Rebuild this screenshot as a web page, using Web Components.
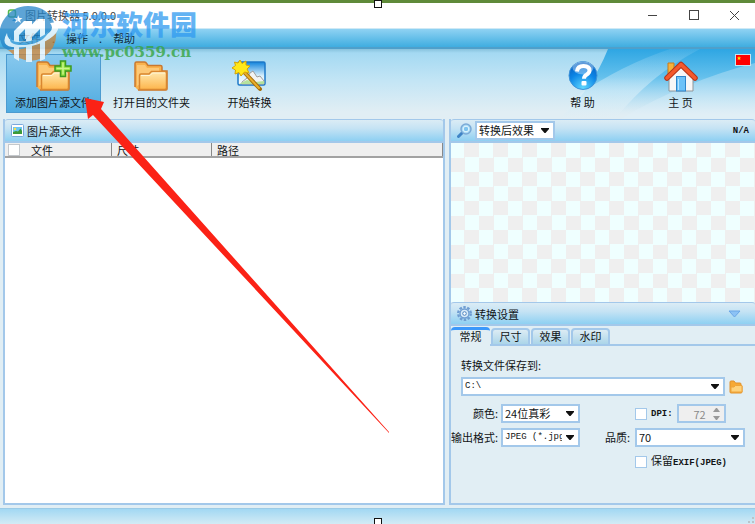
<!DOCTYPE html>
<html lang="zh-CN">
<head>
<meta charset="utf-8">
<meta name="viewport" content="width=device-width, initial-scale=1">
<title>图片转换器</title>
<style>
  body {
    margin: 0;
    background: #5f8a3a;
    font-family: "Noto Sans CJK SC", "Noto Sans", sans-serif;
    font-size: 11px;
    line-height: 16px;
    color: #111416;
    --edge: #a3c8ea;
    --face: #e1eef4;
    --mono: "Liberation Mono", "Noto Sans CJK SC", monospace;
  }
</style>
</head>
<body>
<app-window></app-window>

<script>
const ARROW = `url("data:image/svg+xml,%3Csvg xmlns='http://www.w3.org/2000/svg' width='8' height='5'%3E%3Cpath d='M0 0h8v1L4.500 5h-1L0 1z' fill='%23111'/%3E%3C/svg%3E")`;
const SPIN = `url("data:image/svg+xml,%3Csvg xmlns='http://www.w3.org/2000/svg' width='7' height='12'%3E%3Cpath d='M0 4l3-4h1l3 4zM0 8l3 4h1l3-4z' fill='%23999'/%3E%3C/svg%3E")`;

const FOLDER = `
  <defs>
    <linearGradient id="f" x2="0" y2="1"><stop stop-color="#ffeab0"/><stop offset="1" stop-color="#fdb54c"/></linearGradient>
  </defs>
  <path d="M1 27V3.500Q1 2 2.500 2h8Q12 2 13 4l1 1.500h12.500Q28 5.500 28 7v4h5V29q0 1-1 1H4" fill="#f9b24d" stroke="#c9782f" stroke-width="1.500"/>
  <path d="M3 26V5h8l2 3h12v4" fill="#fdc977"/>
  <path d="M5.500 29.500V15.500q0-1.500 1.500-1.500h8l2.500-2.500H31q1.500 0 1.500 1.500v15q0 1.500-1.500 1.500z" fill="url(#f)" stroke="#d98730" stroke-width="1.500"/>
  <path d="M7 15.500h9l2.500-2.500H31" fill="none" stroke="#fff6d8"/>`;

const ICONS = {
  add: `<svg width="36" height="32" viewBox="0 0 36 32">${FOLDER}
    <path d="M24.500 1h5v5h5.500v5h-5.500v5.500h-5V11H19V6h5.500z" fill="#8ede3c" stroke="#3d9a22" stroke-width="1.500"/>
    <path d="M27 2.500v12M20.500 8.500h13" stroke="#c9f58c" stroke-width="1.500"/></svg>`,
  open: `<svg width="36" height="32" viewBox="0 0 36 32">${FOLDER}</svg>`,
  convert: `<svg width="36" height="32" viewBox="0 0 36 32">
    <defs><linearGradient id="s" x2="0" y2="1"><stop stop-color="#1184dd"/><stop offset=".6" stop-color="#d9f0fc"/><stop offset="1" stop-color="#fff"/></linearGradient></defs>
    <rect x="6" y="2" width="27" height="23" rx="1.500" fill="url(#s)" stroke="#1c78c8" stroke-width="1.500"/>
    <path d="M10 22l5-4 3-5 3-2 4 6 3-1 4 5v3H10z" fill="#f2f3f3" stroke="#9d9d9d"/>
    <path d="M7 24l8-4 8 2 9-1v3z" fill="#b5e29c"/>
    <path d="M12 12l16 17" stroke="#a66d08" stroke-width="4" stroke-linecap="round"/>
    <path d="M12 12l15 16" stroke="#e8ae2c" stroke-width="2" stroke-linecap="round"/>
    <path d="M8 0l2 3.500 4-2.500v4l4 1-3 3 2 4-4.500-1L9 16l-2-3.500L3 14l.5-4L0 8l3.500-2.500L2.500 2 6 3z" fill="#ffe818" stroke="#d8a400"/></svg>`,
  help: `<svg width="30" height="32" viewBox="0 0 30 32">
    <defs><radialGradient id="h" cx=".5" cy=".95" r=".9"><stop stop-color="#5fd8ff"/><stop offset=".6" stop-color="#0c86e6"/><stop offset="1" stop-color="#0862c4"/></radialGradient></defs>
    <circle cx="15" cy="15.500" r="14" fill="url(#h)" stroke="#3f93d8"/>
    <ellipse cx="15" cy="8" rx="10.500" ry="6.500" fill="#fff" opacity=".35"/>
    <path d="M9 11.500q.5-5.500 6.500-5.500 6 0 6 4.500 0 2.500-3 4.200-2.500 1.300-2.500 4" fill="none" stroke="#fff" stroke-width="4"/>
    <rect x="13.500" y="21" width="5" height="4.500" rx="1" fill="#fff"/></svg>`,
  home: `<svg width="34" height="32" viewBox="0 0 34 32">
    <path d="M4 14V3h6v8z" fill="#f8b23a" stroke="#c77b1a"/>
    <path d="M5 16L17 5l12 11v15H5z" fill="#f7f7f7" stroke="#8f9599"/>
    <rect x="12.500" y="16.500" width="9" height="14.500" fill="#6cc2f8" stroke="#2e86cc"/>
    <path d="M14.500 19v11" stroke="#b7e3ff"/>
    <path d="M3 18L17 4.500 31 18" fill="none" stroke="#b5341a" stroke-width="5.500" stroke-linecap="round" stroke-linejoin="round"/>
    <path d="M3 18L17 4.500 31 18" fill="none" stroke="#f4592c" stroke-width="3.500" stroke-linecap="round" stroke-linejoin="round"/></svg>`,
  flag: `<svg width="16" height="12" viewBox="0 0 16 12"><rect x=".5" y=".5" width="15" height="11" fill="#f00" stroke="#c5e4f0"/><path d="M4 2l.6 1.500H6L5 4.500l.4 1.500L4 5.200 2.600 6 3 4.500 2 3.500h1.400z" fill="#ffde00"/></svg>`,
  picture: `<svg width="13" height="13" viewBox="0 0 13 13"><rect x=".5" y=".5" width="12" height="12" rx="1" fill="#fff" stroke="#7ba8dc"/><rect x="2" y="3" width="9" height="7" fill="#6cc6f2"/><path d="M2 10V8l3-1 2 .5 2.500-3L11 7v3z" fill="#3b9a3a"/><circle cx="4" cy="5" r="1.200" fill="#fbe04a"/></svg>`,
  lens: `<svg width="15" height="15" viewBox="0 0 15 15"><path d="M1.500 13.500L5 10" stroke="#3f84c6" stroke-width="3" stroke-linecap="round"/><circle cx="9" cy="6" r="5" fill="#a9dcf6" stroke="#7aa9d6" stroke-width="1.500"/><circle cx="9" cy="6" r="2.800" fill="#7ec4ee" stroke="#e6f7ff"/></svg>`,
  gear: `<svg width="15" height="15" viewBox="0 0 15 15"><circle cx="7.500" cy="7.500" r="6.300" fill="none" stroke="#6f9dd2" stroke-width="2.400" stroke-dasharray="2.500 1.460"/><circle cx="7.500" cy="7.500" r="4.500" fill="#d8eaf8" stroke="#6f9dd2" stroke-width="1.400"/><circle cx="7.500" cy="7.500" r="1.800" fill="#fff" stroke="#4d83c0"/></svg>`,
  folder: `<svg width="14" height="14" viewBox="0 0 14 14"><path d="M1 12V2q0-1 1-1h3l1.500 2H11q1 0 1 1v2h1v6q0 1-1 1H2q-1 0-1-1z" fill="#f7a934" stroke="#e0912c"/><path d="M2 12V7h3l1.500-1.500H13V12z" fill="#ffd27a" stroke="#eea43a"/></svg>`,
};

// title bar with the caption buttons
class TitleBar extends HTMLElement {
  constructor() {
    super();
    this.attachShadow({ mode: "open" }).innerHTML =
`<style>
  :host {
    display: flex;
    align-items: center;
    height: 25px;
    background: #fff;
    margin-top: 3px;
    padding-left: 7px;
    color: #444;
  }
  h1 {
    flex: 1;
    margin: 0 0 2px 6px;
    font: inherit;
    font-size: 11px;
  }
  button {
    width: 41px;
    height: 25px;
    padding: 0;
    border: 0;
    background: none;
  }
  svg { display: block; margin: auto; }
  .logo { margin: 0; }
</style>
<svg class="logo" width="12" height="14" viewBox="0 0 12 14"><rect x="1.500" y="1" width="7" height="7" rx="2" fill="#dff5d8" stroke="#54b948" stroke-width="1.500"/><path d="M5 12l6-6v6z" fill="#3a9ad8"/></svg>
<h1><slot></slot></h1>
<button aria-label="最小化"><svg width="11" height="11"><path d="M1 5.500h9" stroke="#444"/></svg></button>
<button aria-label="最大化"><svg width="11" height="11"><rect x="1.500" y=".5" width="9" height="9" fill="none" stroke="#444"/></svg></button>
<button aria-label="关闭"><svg width="11" height="11"><path d="M1 1l9 9M10 1l-9 9" stroke="#444"/></svg></button>`;
  }
}
customElements.define("title-bar", TitleBar);

class MenuBar extends HTMLElement {
  constructor() {
    super();
    this.attachShadow({ mode: "open" }).innerHTML =
`<style>
  :host {
    display: flex;
    align-items: center;
    gap: 11px;
    height: 18px;
    padding-left: 19px;
    background: linear-gradient(#8fd2f3, #3fade0);
    border-top: 1px solid #cfe9f5;
    border-bottom: 2px solid #4f9fca;
    color: #0e2a3a;
  }
  ::slotted(button) {
    padding: 0;
    border: 0;
    background: none;
    font: inherit;
    color: inherit;
  }
</style>
<slot></slot>`;
  }
}
customElements.define("menu-bar", MenuBar);

class ToolButton extends HTMLElement {
  constructor() {
    super();
    this.attachShadow({ mode: "open" });
  }

  connectedCallback() {
    this.shadowRoot.innerHTML =
`<style>
  :host {
    display: block;
    width: 95px;
  }
  button {
    display: flex;
    flex-direction: column;
    align-items: center;
    gap: 2px;
    box-sizing: border-box;
    width: 100%;
    height: 59px;
    padding: 5px 0 0;
    border: 1px solid transparent;
    background: none;
    font: inherit;
    color: inherit;
    white-space: pre;
  }
  :host([active]) button {
    background: linear-gradient(#87c8ee, #4fabe0);
    border-color: #4c9bd0;
  }
  svg { display: block; }
</style>
<button>${ICONS[this.getAttribute("icon")]}<span><slot></slot></span></button>`;
  }
}
customElements.define("tool-button", ToolButton);

class ToolBar extends HTMLElement {
  constructor() {
    super();
    this.attachShadow({ mode: "open" }).innerHTML =
`<style>
  :host {
    display: flex;
    position: relative;
    gap: 3px;
    box-sizing: border-box;
    height: 70px;
    padding: 5px 4px 0 6px;
    background: linear-gradient(#86c2dd, #a4d9f2 4px, #c3e5f5 45%, #e1eef4 90%);
  }
  #rays {
    position: absolute;
    top: 0;
    right: 0;
  }
  ::slotted(*) { position: relative; }
  .space { flex: 1; }
  .flag {
    position: relative;
    height: 12px;
    margin-left: 4px;
    padding: 0;
    border: 0;
    background: none;
  }
  .flag svg { display: block; }
</style>
<svg id="rays" width="255" height="70" viewBox="0 0 255 70">
  <defs>
    <linearGradient id="d" x2="0" y2="1"><stop stop-color="#2ea6e3"/><stop offset=".4" stop-color="#4db7ea" stop-opacity=".8"/><stop offset=".95" stop-color="#b4dff4" stop-opacity="0"/></linearGradient>
    <linearGradient id="e" x2="0" y2="1"><stop stop-color="#c5e8f8" stop-opacity=".1"/><stop offset=".6" stop-color="#d8eff9" stop-opacity=".6"/><stop offset="1" stop-color="#e1eef4" stop-opacity=".6"/></linearGradient>
  </defs>
  <path d="M108 0H255V70H60Q92 40 108 0z" fill="url(#d)"/>
  <path d="M170 0Q122 16 78 46L60 70H115Q150 26 200 0z" fill="url(#e)"/>
  <path d="M255 14Q185 32 120 70H255z" fill="#dff1f9" opacity=".35"/>
</svg>
<slot></slot>
<span class="space"></span>
<slot name="end"></slot>
<button class="flag" aria-label="语言">${ICONS.flag}</button>`;
  }
}
customElements.define("tool-bar", ToolBar);

// framed panel: header strip with icon, slotted title and trailing item
class AppPanel extends HTMLElement {
  constructor() {
    super();
    this.attachShadow({ mode: "open" });
  }

  connectedCallback() {
    this.shadowRoot.innerHTML =
`<style>
  :host {
    display: flex;
    flex-direction: column;
    min-width: 0;
    border-left: 2px solid var(--edge);
  }
  header {
    display: flex;
    align-items: center;
    gap: 3px;
    box-sizing: border-box;
    height: 24px;
    padding: 0 6px;
    background: linear-gradient(#dbecf5, #c5e3f4 40%, #8ed0f2);
    border-top: 1px solid var(--edge);
    border-bottom: 2px solid var(--edge);
    border-radius: 3px 3px 0 0;
  }
  .title { flex: 1; display: flex; }
  header svg { display: block; }
</style>
<header>${ICONS[this.getAttribute("icon")]}<div class="title"><slot name="title"></slot></div><slot name="end"></slot></header>
<slot></slot>`;
  }
}
customElements.define("app-panel", AppPanel);

class FileList extends HTMLElement {
  constructor() {
    super();
    this.attachShadow({ mode: "open" }).innerHTML =
`<style>
  :host {
    display: block;
    flex: 1;
    background: #fff;
  }
  table {
    width: 100%;
    border-collapse: collapse;
    table-layout: fixed;
  }
  th {
    height: 13px;
    padding: 0 0 0 5px;
    background: #efefef;
    border-right: 1px solid #888;
    border-bottom: 2px solid #a2a2a2;
    font-weight: normal;
    line-height: 12px;
    text-align: left;
  }
  th:first-child { padding-left: 3px; width: 103px; }
  th:nth-child(2) { width: 94px; }
  label { display: flex; align-items: center; gap: 11px; }
  input {
    appearance: none;
    width: 12px;
    height: 12px;
    margin: 0;
    background: #fff;
    border: 1px solid #c4c8cc;
  }
</style>
<table>
  <thead><tr><th scope="col"><label><input type="checkbox">文件</label></th><th scope="col">尺寸</th><th scope="col">路径</th></tr></thead>
  <tbody></tbody>
</table>`;
  }
}
customElements.define("file-list", FileList);

class PreviewArea extends HTMLElement {
  constructor() {
    super();
    this.attachShadow({ mode: "open" }).innerHTML =
`<style>
  :host {
    display: block;
    height: 159px;
    background: conic-gradient(#efefef 25%, #efffff 0 50%, #efefef 0 75%, #efffff 0) -1px 0 / 29px 29px;
  }
</style>`;
  }
}
customElements.define("preview-area", PreviewArea);

// drop-down; options come as a | separated list
class SelectBox extends HTMLElement {
  constructor() {
    super();
    this.attachShadow({ mode: "open" });
  }

  connectedCallback() {
    const options = this.getAttribute("options").split("|");
    this.shadowRoot.innerHTML =
`<style>
  :host { display: block; }
  select {
    display: block;
    appearance: none;
    box-sizing: border-box;
    width: 100%;
    height: 19px;
    padding: 0 16px 0 2px;
    border: 2px solid var(--edge);
    border-radius: 0;
    background: #fff ${ARROW} no-repeat right 4px center;
    font: inherit;
    line-height: 15px;
    color: inherit;
    overflow: hidden;
  }
  :host([mono]) select { font-family: var(--mono); font-size: 9px; }
</style>
<select aria-label="${this.getAttribute("label")}"></select>`;
    const select = this.shadowRoot.querySelector("select");
    options.forEach(text => select.add(new Option(text)));
  }
}
customElements.define("select-box", SelectBox);

class AppTabs extends HTMLElement {
  constructor() {
    super();
    this.attachShadow({ mode: "open" });
  }

  connectedCallback() {
    this.shadowRoot.innerHTML =
`<style>
  :host {
    display: flex;
    flex-direction: column;
    flex: 1;
    background: var(--face);
  }
  #tabs {
    display: flex;
    align-items: flex-end;
    gap: 1px;
    padding-top: 1px;
    background: linear-gradient(var(--edge), var(--edge)) bottom / 100% 2px no-repeat;
  }
  button {
    box-sizing: border-box;
    width: 39px;
    height: 18px;
    padding: 0 0 2px;
    border: 2px solid var(--edge);
    border-radius: 4px 4px 0 0;
    background: linear-gradient(#dcecf4, #abd5e9);
    font: inherit;
    line-height: 12px;
    color: inherit;
  }
  button.active {
    height: 19px;
    padding-bottom: 4px;
    border: 0;
    border-top: 3px solid #3b98fb;
    background: var(--face);
  }
</style>
<div id="tabs" role="tablist"></div>
<slot></slot>`;
    this.#init();
  }

  #init() {
    const tabs = this.shadowRoot.querySelector("#tabs");
    this.getAttribute("labels").split(",").forEach((text, i) => {
      const btn = document.createElement("button");
      btn.textContent = text;
      btn.setAttribute("role", "tab");
      btn.addEventListener("click", () => this.#select(i));
      tabs.appendChild(btn);
    });
    this.#select(0);
  }

  #select(index) {
    this.shadowRoot.querySelectorAll("button").forEach((btn, i) => {
      btn.classList.toggle("active", i === index);
      btn.setAttribute("aria-selected", i === index);
    });
  }
}
customElements.define("app-tabs", AppTabs);

class SettingsForm extends HTMLElement {
  constructor() {
    super();
    this.attachShadow({ mode: "open" }).innerHTML =
`<style>
  :host {
    display: block;
    padding: 11px 10px 0 0;
  }
  .path {
    display: flex;
    align-items: center;
    gap: 4px;
    margin: 4px 2px 8px 10px;
  }
  .path select-box { flex: 1; }
  .path button { padding: 0; border: 0; background: none; }
  svg { display: block; }
  .title { padding-left: 10px; }
  .grid {
    display: grid;
    grid-template-columns: 49px 79px 53px 1fr;
    column-gap: 1px;
    row-gap: 5px;
    align-items: center;
  }
  .name {
    padding: 0 2px 2px 0;
    text-align: right;
    white-space: nowrap;
  }
  .quality { padding-right: 4px; }
  .check {
    grid-column: 4;
    display: flex;
    align-items: center;
    gap: 4px;
  }
  .check label { display: flex; align-items: center; gap: 4px; }
  .latin { font-family: var(--mono); font-size: 9px; font-weight: bold; }
  input[type="checkbox"] {
    appearance: none;
    box-sizing: border-box;
    width: 12px;
    height: 12px;
    margin: 0;
    background: #fff;
    border: 1px solid var(--edge);
  }
  input[type="number"] {
    appearance: textfield;
    box-sizing: border-box;
    width: 49px;
    height: 19px;
    padding: 0 18px 0 0;
    border: 2px solid var(--edge);
    background: #efefef ${SPIN} no-repeat right 4px center;
    font: inherit;
    text-align: right;
    color: #8a8a8a;
  }
  input::-webkit-inner-spin-button { display: none; }
</style>
<div class="title">转换文件保存到:</div>
<div class="path">
  <select-box mono label="转换文件保存到" options="C:\\"></select-box>
  <button aria-label="浏览">${ICONS.folder}</button>
</div>
<div class="grid">
  <span class="name">颜色:</span>
  <select-box label="颜色" options="24位真彩"></select-box>
  <div class="check">
    <label><input type="checkbox"><span class="latin">DPI:</span></label>
    <input type="number" value="72" aria-label="DPI" disabled>
  </div>
  <span class="name">输出格式:</span>
  <select-box mono label="输出格式" options="JPEG (*.jpg)"></select-box>
  <span class="name quality">品质:</span>
  <select-box label="品质" options="70"></select-box>
  <div class="check">
    <label><input type="checkbox"><span>保留<span class="latin">EXIF(JPEG)</span></span></label>
  </div>
</div>`;
  }
}
customElements.define("settings-form", SettingsForm);

class StatusBar extends HTMLElement {
  constructor() {
    super();
    this.attachShadow({ mode: "open" }).innerHTML =
`<style>
  :host {
    display: flex;
    justify-content: flex-end;
    align-items: flex-end;
    height: 15px;
    border-top: 1px solid #9ccbe6;
    background: linear-gradient(#a2d8f3, #d3ebf5);
  }
</style>
<svg width="8" height="8"><path d="M5 1h2v2H5zM1 5h2v2H1zM5 5h2v2H5z" fill="#b9c4c9"/></svg>`;
  }
}
customElements.define("status-bar", StatusBar);

// site watermark lying over the window corner
class SiteMark extends HTMLElement {
  constructor() {
    super();
    this.attachShadow({ mode: "open" }).innerHTML =
`<style>
  :host {
    position: absolute;
    top: 5px;
    left: 0;
    display: flex;
    gap: 4px;
    pointer-events: none;
  }
  .name {
    font-size: 27px;
    font-weight: 900;
    line-height: 38px;
    color: #2f9af0;
    opacity: .75;
  }
  .url {
    font: bold 15px/18px "DejaVu Serif", serif;
    color: #38a544;
    opacity: .8;
  }
</style>
<svg width="58" height="60" viewBox="0 0 58 60">
  <g opacity=".74">
    <path d="M3 42A27 27 0 0 1 3 16Q12 1 28 1 44 1 52 13L57 24Q44 40 8 45z" fill="#2585c8"/>
    <path d="M8 45Q36 46 56 24 58 42 44 52 26 62 8 45z" fill="#cf8436"/>
    <path d="M14 26L24 16h8v18h-7V24l-6 6v26l-5-3z" fill="#fff"/>
    <path d="M26 26L37 14h8v40l-5 2V24l-8 8v25h-6z" fill="#fff"/>
    <path d="M57 17Q63 27 44 37 28 44 12 42 0 40 7 28 7 35 15 36 30 38 44 31 56 25 50 18z" fill="#fff"/>
    <path d="M11 31Q9 38 24 37 40 35 49 26 44 38 26 40 6 41 11 31z" fill="#4ba3dc"/>
    <path d="M18 10l1.500 3h3L20 15l1 3-3-2-3 2 1-3-2-2h3z" fill="#fff"/>
  </g>
</svg>
<div><div class="name">河东软件园</div><div class="url">www.pc0359.cn</div></div>`;
  }
}
customElements.define("site-mark", SiteMark);

class AppWindow extends HTMLElement {
  constructor() {
    super();
    this.attachShadow({ mode: "open" }).innerHTML =
`<style>
  :host {
    display: flex;
    flex-direction: column;
    position: relative;
    min-height: 100vh;
  }
  main {
    flex: 1;
    display: grid;
    grid-template-columns: 1fr 306px;
    gap: 4px;
    padding: 0 0 3px 3px;
    background: var(--face);
  }
  main > div {
    display: flex;
    flex-direction: column;
    border-bottom: 2px solid var(--edge);
    min-width: 0;
  }
  .files { border-right: 2px solid var(--edge); }
  app-panel.grow { flex: 1; }
  .view { width: 80px; }
  .info { font: bold 9px/16px var(--mono); }
  .toggle {
    padding: 0 8px;
    border: 0;
    background: none;
  }
  .toggle svg { display: block; }
  .pointer, .grip {
    position: absolute;
    pointer-events: none;
  }
  .pointer { top: 0; left: 0; }
  .grip {
    left: 50%;
    box-sizing: border-box;
    width: 8px;
    height: 8px;
    margin-left: -4px;
    background: #fff;
    border: 1px solid #111;
  }
  .grip.top { top: 0; }
  .grip.bottom { bottom: 0; height: 6px; border-bottom: 0; }
</style>
<title-bar>图片转换器 5.0.0.0</title-bar>
<menu-bar><button>文件</button><span>.</span><button>操作</button><span>.</span><button>帮助</button></menu-bar>
<tool-bar>
  <tool-button icon="add" active>添加图片源文件</tool-button>
  <tool-button icon="open">打开目的文件夹</tool-button>
  <tool-button icon="convert">开始转换</tool-button>
  <tool-button slot="end" icon="help">帮 助</tool-button>
  <tool-button slot="end" icon="home">主 页</tool-button>
</tool-bar>
<main>
  <div class="files">
    <app-panel class="grow" icon="picture">
      <span slot="title">图片源文件</span>
      <file-list></file-list>
    </app-panel>
  </div>
  <div>
    <app-panel icon="lens">
      <select-box class="view" slot="title" label="预览" options="转换后效果"></select-box>
      <span class="info" slot="end">N/A</span>
      <preview-area></preview-area>
    </app-panel>
    <app-panel class="grow" icon="gear">
      <span slot="title">转换设置</span>
      <button class="toggle" slot="end" aria-label="收起"><svg width="13" height="8"><path d="M1 1h11L6.500 7z" fill="#8cc2f5" stroke="#6aa6e6"/></svg></button>
      <app-tabs labels="常规,尺寸,效果,水印">
        <settings-form></settings-form>
      </app-tabs>
    </app-panel>
  </div>
</main>
<status-bar></status-bar>
<site-mark></site-mark>
<svg class="pointer" width="400" height="440"><path d="M85 98l19 4-3 7 288 323v1L93 115l-5 4z" fill="#fb2216"/></svg>
<span class="grip top"></span>
<span class="grip bottom"></span>`;
  }
}
customElements.define("app-window", AppWindow);
</script>
</body>
</html>
